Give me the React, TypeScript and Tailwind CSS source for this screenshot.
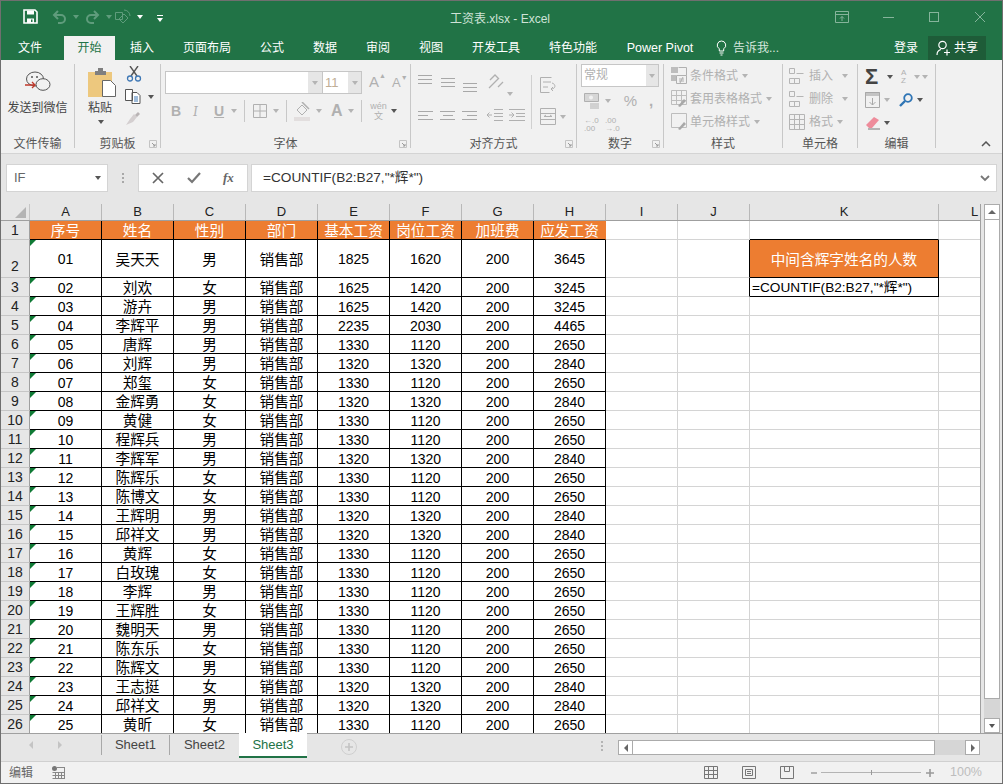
import type { ReactNode } from "react";

const tabs = [
  { name: "文件", w: "w-[58px] mr-[5px]" },
  { name: "开始", w: "w-[51px]", active: true },
  { name: "插入", w: "w-[54px]" },
  { name: "页面布局", w: "w-[76px]" },
  { name: "公式", w: "w-[54px]" },
  { name: "数据", w: "w-[52px]" },
  { name: "审阅", w: "w-[54px]" },
  { name: "视图", w: "w-[52px]" },
  { name: "开发工具", w: "w-[78px]" },
  { name: "特色功能", w: "w-[76px]" },
  { name: "Power Pivot", w: "w-[98px] text-[12.5px]" },
];

const columns = ["A", "B", "C", "D", "E", "F", "G", "H", "I", "J", "K", "L"];
const headers = ["序号", "姓名", "性别", "部门", "基本工资", "岗位工资", "加班费", "应发工资"];

const people: [string, string, number, number, number][] = [
  ["吴天天", "男", 1825, 1620, 3645],
  ["刘欢", "女", 1625, 1420, 3245],
  ["游卉", "男", 1625, 1420, 3245],
  ["李辉平", "男", 2235, 2030, 4465],
  ["唐辉", "男", 1330, 1120, 2650],
  ["刘辉", "男", 1320, 1320, 2840],
  ["郑玺", "女", 1330, 1120, 2650],
  ["金辉勇", "女", 1320, 1320, 2840],
  ["黄健", "女", 1330, 1120, 2650],
  ["程辉兵", "男", 1330, 1120, 2650],
  ["李辉军", "男", 1320, 1320, 2840],
  ["陈辉乐", "女", 1330, 1120, 2650],
  ["陈博文", "女", 1330, 1120, 2650],
  ["王辉明", "男", 1320, 1320, 2840],
  ["邱祥文", "男", 1320, 1320, 2840],
  ["黄辉", "女", 1330, 1120, 2650],
  ["白玫瑰", "女", 1330, 1120, 2650],
  ["李辉", "男", 1330, 1120, 2650],
  ["王辉胜", "女", 1330, 1120, 2650],
  ["魏明天", "男", 1330, 1120, 2650],
  ["陈东乐", "女", 1330, 1120, 2650],
  ["陈辉文", "男", 1330, 1120, 2650],
  ["王志挺", "女", 1320, 1320, 2840],
  ["邱祥文", "男", 1320, 1320, 2840],
  ["黄昕", "女", 1330, 1120, 2650],
];

const formula = '=COUNTIF(B2:B27,"*辉*")';

const Caret = ({ dark, white }: { dark?: boolean; white?: boolean }) => (
  <span
    className={`inline-block w-0 h-0 shrink-0 border-x-[3.5px] border-x-transparent border-t-[4px] ${
      white ? "border-t-white" : dark ? "border-t-[#555555]" : "border-t-[#b4b4b4]"
    }`}
  />
);

const Icon = ({ w, h, children, className }: { w: number; h: number; children: ReactNode; className?: string }) => (
  <svg width={w} height={h} viewBox={`0 0 ${w} ${h}`} fill="none" className={`shrink-0 ${className ?? ""}`}>
    {children}
  </svg>
);

const Launcher = () => (
  <Icon w={8} h={8}>
    <path d="M0.5 0.5h7v7h-7z" stroke="#c4c4c4" />
    <path d="M3 3l3 3M6 4v2H4" stroke="#9a9a9a" />
  </Icon>
);

const Lines = ({ widths, aligns }: { widths: number[]; aligns: string }) => (
  <div className={`flex flex-col gap-[3px] w-[15px] ${aligns}`}>
    {widths.map((w, i) => (
      <div key={i} className="h-px bg-[#a8a8a8]" style={{ width: w }} />
    ))}
  </div>
);

const Group = ({ w, label, launcher, children }: { w: string; label: string; launcher?: boolean; children: ReactNode }) => (
  <div className={`${w} shrink-0 flex flex-col border-r border-[#c8c8c8]`}>
    <div className="flex-1 min-h-0">{children}</div>
    <div className="h-[14px] relative flex items-center justify-center pt-[5px] text-[12px] text-[#555555] leading-none">
      {label}
      {launcher && (
        <span className="absolute right-[3px] top-[6px] flex">
          <Launcher />
        </span>
      )}
    </div>
  </div>
);

const StyleRow = ({ icon, label }: { icon: ReactNode; label: string }) => (
  <div className="h-[23px] flex items-center text-[12px] text-[#b0b0b0]">
    <span className="w-[19px] flex">{icon}</span>
    <span>{label}</span>
    <span className="ml-[4px] flex">
      <Caret />
    </span>
  </div>
);

const GridIcon = ({ w = 16, h = 16 }: { w?: number; h?: number }) => (
  <Icon w={w} h={h}>
    <path d={`M0.5 0.5h${w - 1}v${h - 1}h-${w - 1}z M0.5 5.5h${w - 1} M0.5 10.5h${w - 1} M5.5 0.5v${h - 1} M10.5 0.5v${h - 1}`} stroke="#b5b5b5" />
  </Icon>
);

const TitleBar = () => (
  <div className="h-[35px] bg-[#217346] flex items-center text-[12px] text-[#cfe3d7] relative">
    <div className="flex items-center ml-[22px] mb-[4px]">
      <Icon w={15} h={15}>
        <path d="M1 1h11l2 2v11H1z" stroke="#fff" strokeWidth="1.6" />
        <path d="M4 1.5h7v4H4zM4 9.5h7V14H4z" fill="#fff" />
        <path d="M8 10.5h1.5v2.5H8z" fill="#217346" />
      </Icon>
      <Icon w={15} h={14} className="ml-[14px]">
        <path d="M2 5h7a4 4 0 0 1 0 8H6M6 1L2 5l4 4" stroke="#5f9c7c" strokeWidth="2" />
      </Icon>
      <span className="ml-[6px] flex">
        <span className="inline-block w-0 h-0 border-x-[3.5px] border-x-transparent border-t-[4px] border-t-[#5f9c7c]" />
      </span>
      <Icon w={15} h={14} className="ml-[6px]">
        <path d="M13 5H6a4 4 0 0 0 0 8h3M9 1l4 4-4 4" stroke="#5f9c7c" strokeWidth="2" />
      </Icon>
      <span className="ml-[6px] flex">
        <span className="inline-block w-0 h-0 border-x-[3.5px] border-x-transparent border-t-[4px] border-t-[#5f9c7c]" />
      </span>
      <Icon w={17} h={16} className="ml-[3px]">
        <path d="M0.5 3.5h7v7h-7zM9 5l4 4-5 5-4-4zM9 1a6 6 0 0 1 6 6" stroke="#5f9c7c" />
      </Icon>
      <span className="ml-[5px] flex">
        <Caret white />
      </span>
      <span className="ml-[14px] flex flex-col items-center gap-[2px] mt-[3px]">
        <span className="w-[6px] h-px bg-white" />
        <Caret white />
      </span>
    </div>
    <span className="absolute left-[449px] top-[9px]">工资表.xlsx - Excel</span>
    <div className="ml-auto flex items-center mb-[3px]">
      <Icon w={14} h={12} className="mr-[34px]">
        <path d="M0.5 0.5h13v11h-13zM0.5 3.5h13M7 10V5.5M5 7.5l2-2 2 2" stroke="#86b49b" />
      </Icon>
      <span className="w-[11px] h-px bg-[#86b49b] mr-[35px]" />
      <span className="w-[10px] h-[10px] border border-[#86b49b] mr-[35px]" />
      <Icon w={12} h={12} className="mr-[16px]">
        <path d="M1 1l10 10M11 1L1 11" stroke="#86b49b" />
      </Icon>
    </div>
  </div>
);

const TabBar = () => (
  <div className="h-[24px] bg-[#217346] flex text-[12px] text-white">
    {tabs.map((t) => (
      <div
        key={t.name}
        className={`${t.w} flex items-center justify-center ${t.active ? "bg-[#f1f1f1] text-[#217346]" : ""}`}
      >
        {t.name}
      </div>
    ))}
    <div className="ml-[6px] flex items-center gap-[3px] text-[12px] text-[#d7e7de]">
      <Icon w={13} h={16}>
        <path d="M6.5 1a4.2 4.2 0 0 0-2.2 7.8V11h4.4V8.8A4.2 4.2 0 0 0 6.5 1zM4.5 13h4M5.5 15h2" stroke="#fff" />
      </Icon>
      <span className="ml-[2px]">告诉我...</span>
    </div>
    <span className="ml-auto flex items-center mr-[10px]">登录</span>
    <div className="w-[58px] mr-[16px] bg-[#1e5c38] flex items-center justify-center gap-[3px]">
      <Icon w={15} h={16}>
        <circle cx="6.5" cy="5" r="3.7" stroke="#fff" strokeWidth="1.2" />
        <path d="M1 15c0-3 2-5 4-5.5M8 12.5h6M11 9.5v6" stroke="#fff" strokeWidth="1.2" />
      </Icon>
      <span>共享</span>
    </div>
  </div>
);

const Ribbon = () => (
  <div className="h-[94px] bg-[#f1f1f1] flex pt-[4px] pb-[5px] border-b border-[#d4d4d4]">
    <Group w="w-[74px]" label="文件传输">
      <div className="flex flex-col items-center pt-[6px]">
        <Icon w={26} h={24}>
          <ellipse cx="10" cy="9" rx="8.5" ry="7" stroke="#555" />
          <ellipse cx="18" cy="14.5" rx="7" ry="5.8" fill="#f1f1f1" stroke="#555" />
          <circle cx="7" cy="7" r="1" fill="#555" />
          <circle cx="12" cy="7" r="1" fill="#555" />
          <path d="M0 15h10M7 12l3 3-3 3" stroke="#c0392b" strokeWidth="1.3" />
        </Icon>
        <span className="text-[12px] text-[#444444] mt-[4px] leading-[20px]">发送到微信</span>
      </div>
    </Group>
    <Group w="w-[86px]" label="剪贴板" launcher>
      <div className="flex">
        <div className="w-[49px] flex flex-col items-start pt-[4px] pl-[13px]">
          <Icon w={30} h={30}>
            <path d="M0 4h24v25H0z" fill="#edc87e" />
            <path d="M7 3h3V0h5v3h3v4H7z" fill="#7f7f7f" />
            <path d="M14.5 12.5h8l5 5v11h-13z" fill="#fff" stroke="#666" />
          </Icon>
          <span className="text-[12px] text-[#444444] leading-[18px] mt-[1px]">粘贴</span>
          <span className="flex mt-[3px] ml-[10px]">
            <Caret dark />
          </span>
        </div>
        <div className="flex flex-col pl-[1px] pt-[2px]">
          <Icon w={16} h={16} className="ml-[1px]">
            <path d="M4 0l7 10M12 0L5 10" stroke="#555" strokeWidth="1.4" />
            <circle cx="4" cy="12.5" r="2.5" stroke="#3f78b5" strokeWidth="1.3" />
            <circle cx="12" cy="12.5" r="2.5" stroke="#3f78b5" strokeWidth="1.3" />
          </Icon>
          <div className="flex items-center mt-[7px] gap-[6px]">
            <Icon w={17} h={15}>
              <path d="M0.5 0.5h7v11h-7zM7 3.5h5l3 3v8H7z" fill="#fff" stroke="#555" />
              <path d="M9 8h4M9 10h4M9 12h4" stroke="#3f78b5" />
            </Icon>
            <Caret dark />
          </div>
          <Icon w={16} h={14} className="mt-[8px]">
            <path d="M1 13l7-3 4-5-3-3-4 5z" fill="#d4cfd0" />
            <path d="M10 3l3-3 2 2-3 3z" fill="#b9b4b5" />
          </Icon>
        </div>
      </div>
    </Group>
    <Group w="w-[250px]" label="字体" launcher>
      <div className="pl-[4px] pt-[7px]">
        <div className="flex items-center">
          <div className="w-[197px] h-[23px] flex bg-white border border-[#c6c6c6]">
            <div className="w-[142px]" />
            <div className="w-[14px] bg-[#e6e6e6] flex items-center justify-center">
              <Caret />
            </div>
            <div className="w-[1px] bg-[#c6c6c6]" />
            <div className="flex-1 flex items-center pl-[2px] text-[13px] text-[#c0ae96]">11</div>
            <div className="w-[13px] bg-[#e6e6e6] flex items-center justify-center">
              <Caret />
            </div>
          </div>
          <span className="ml-[7px] text-[15px] text-[#b0b0b0] w-[23px] flex">
            A<span className="text-[7px] leading-[10px]">▲</span>
          </span>
          <span className="text-[13px] text-[#b0b0b0] flex">
            A<span className="text-[7px] leading-[10px]">▼</span>
          </span>
        </div>
        <div className="flex items-center h-[22px] mt-[6px] text-[#b0b0b0]">
          <span className="ml-[6px] w-[22px] text-[14px] font-bold">B</span>
          <span className="w-[21px] text-[14px] italic font-serif">I</span>
          <span className="w-[17px] text-[14px] font-bold underline">U</span>
          <Caret />
          <span className="ml-[7px] w-px h-[22px] bg-[#c8c8c8]" />
          <Icon w={14} h={14} className="ml-[8px]">
            <path d="M0.5 0.5h13v13h-13zM7 0v14M0 7h14" stroke="#b0b0b0" />
          </Icon>
          <span className="ml-[6px] flex">
            <Caret />
          </span>
          <span className="ml-[7px] w-px h-[22px] bg-[#c8c8c8]" />
          <Icon w={17} h={19} className="ml-[7px]">
            <path d="M3 8l5-5 5 5-5 5z" stroke="#b0b0b0" />
            <path d="M8 0l7 7" stroke="#b0b0b0" strokeWidth="1.5" />
            <path d="M0 15h16v4H0z" fill="#e2dede" />
          </Icon>
          <span className="ml-[5px] flex">
            <Caret />
          </span>
          <span className="ml-[9px] w-[15px] text-[16px] font-semibold">A</span>
          <span className="ml-[2px] flex">
            <Caret />
          </span>
          <span className="ml-[7px] w-px h-[22px] bg-[#c8c8c8]" />
          <div className="ml-[8px] w-[17px] flex flex-col items-center text-[9px] leading-[10px]">
            <span>wén</span>
            <span>文</span>
          </div>
          <span className="ml-[4px] flex">
            <Caret dark />
          </span>
        </div>
      </div>
    </Group>
    <Group w="w-[166px]" label="对齐方式" launcher>
      <div className="flex pl-[7px] pt-[5px]">
        <div className="w-[113px] flex flex-col">
          <div className="flex h-[31px]">
            <div className="pt-[6px]">
              <Lines widths={[14, 14, 14]} aligns="" />
            </div>
            <div className="pt-[9px] ml-[8px]">
              <Lines widths={[14, 14, 14]} aligns="" />
            </div>
            <div className="pt-[14px] ml-[7px]">
              <Lines widths={[14, 14, 14]} aligns="" />
            </div>
            <Icon w={16} h={17} className="ml-[10px] mt-[4px]">
              <path d="M1 15L11 5M2 7l5-5 3 3" stroke="#b0b0b0" strokeWidth="1.3" />
              <path d="M10 14l5-5" stroke="#b0b0b0" strokeWidth="1.3" />
            </Icon>
            <span className="ml-[3px] mt-[10px]">
              <Caret />
            </span>
          </div>
          <div className="flex mt-[9px] items-center">
            <Lines widths={[15, 10, 15]} aligns="items-start" />
            <div className="ml-[7px]">
              <Lines widths={[15, 10, 15]} aligns="items-center" />
            </div>
            <div className="ml-[7px]">
              <Lines widths={[15, 10, 15]} aligns="items-end" />
            </div>
            <Icon w={16} h={12} className="ml-[10px]">
              <path d="M7 0.5h9M7 4.5h9M7 7.5h9M7 11.5h9M5 6H0M2.5 3.5L0 6l2.5 2.5" stroke="#b0b0b0" />
            </Icon>
            <Icon w={16} h={12} className="ml-[6px]">
              <path d="M0 0.5h16M7 4.5h9M7 7.5h9M0 11.5h16M0 6h5M2.5 3.5L5 6 2.5 8.5" stroke="#b0b0b0" />
            </Icon>
          </div>
        </div>
        <div className="w-px h-[54px] bg-[#d0d0d0] mt-[6px]" />
        <div className="flex flex-col pl-[8px] pt-[8px]">
          <Icon w={16} h={17}>
            <path d="M0.5 0.5h11M0.5 0.5v15h9M3 5h8M3 10h5M12 6c4 1 4 6-1 6M13 10l-2 2 2 2" stroke="#b0b0b0" />
          </Icon>
          <div className="flex items-center gap-[4px] mt-[14px]">
            <Icon w={16} h={17}>
              <path d="M0.5 0.5h15v16H0.5zM0.5 5.5h15M0.5 11.5h15M4 8.5h8M4 8.5l2-1.5M12 8.5l-2-1.5" stroke="#b0b0b0" />
            </Icon>
            <Caret />
          </div>
        </div>
      </div>
    </Group>
    <Group w="w-[87px]" label="数字" launcher>
      <div className="pl-[4px]">
        <div className="w-[78px] h-[23px] flex bg-white border border-[#c6c6c6] text-[12px] text-[#b0b0b0]">
          <span className="flex-1 pl-[2px] leading-[21px]">常规</span>
          <span className="w-[12px] bg-[#e6e6e6] flex items-center justify-center">
            <Caret />
          </span>
        </div>
        <div className="flex items-center h-[22px] mt-[3px] pl-[3px] text-[#b0b0b0]">
          <Icon w={16} h={16}>
            <path d="M0.5 0.5h14v8h-14z" fill="#d6d6d6" stroke="#b0b0b0" />
            <circle cx="7" cy="4.5" r="2" fill="#f1f1f1" />
            <path d="M6 11h9M6 13h9M6 15h9" stroke="#b0b0b0" />
          </Icon>
          <span className="ml-[5px] flex">
            <Caret />
          </span>
          <span className="ml-[8px] text-[15px] w-[23px] text-center">%</span>
          <span className="ml-[7px] text-[15px] font-bold">,</span>
        </div>
        <div className="flex h-[24px] mt-[1px] pl-[3px] gap-[7px] items-center">
          <div className="text-[8px] leading-[8px] text-[#b0b0b0] w-[14px]">
            ←.0
            <br />
            .00
          </div>
          <div className="text-[8px] leading-[8px] text-[#b0b0b0] w-[14px]">
            .00
            <br />
            →.0
          </div>
        </div>
      </div>
    </Group>
    <Group w="w-[119px]" label="样式">
      <div className="pl-[7px]">
        <StyleRow
          label="条件格式"
          icon={
            <Icon w={16} h={17}>
              <path d="M0 0h7v6H0zM0 8h5v6H0z" fill="#bdbdbd" />
              <path d="M7.5 0.5h8v8M5.5 8.5h10v8h-10z" stroke="#b0b0b0" />
              <path d="M8 12h5M8 14h5M12 10l-3 6" stroke="#b0b0b0" />
            </Icon>
          }
        />
        <StyleRow
          label="套用表格格式"
          icon={
            <Icon w={16} h={17}>
              <path d="M0.5 0.5h15v14h-15zM0.5 5.5h15M0.5 10.5h15M5.5 0.5v14M10.5 0.5v14" stroke="#bdbdbd" />
              <path d="M7 16l6-7 2 2-6 6z" fill="#a8a8a8" />
            </Icon>
          }
        />
        <StyleRow
          label="单元格样式"
          icon={
            <Icon w={16} h={17}>
              <path d="M0.5 0.5h15v14h-15z" stroke="#bdbdbd" />
              <path d="M7 16l6-7 2 2-6 6z" fill="#a8a8a8" />
            </Icon>
          }
        />
      </div>
    </Group>
    <Group w="w-[75px]" label="单元格">
      <div className="pl-[6px] text-[12px] text-[#b0b0b0]">
        {["插入", "删除", "格式"].map((t, i) => (
          <div key={t} className="h-[23px] flex items-center">
            <span className="w-[20px] flex">
              {i === 2 ? (
                <GridIcon />
              ) : (
                <Icon w={17} h={16}>
                  <path d="M0.5 0.5h5v5h-5zM0.5 10.5h5v5h-5zM5.5 10.5h5v5h-5zM7.5 5.5h7" stroke="#b5b5b5" />
                </Icon>
              )}
            </span>
            <span>{t}</span>
            <span className={i === 2 ? "ml-[4px] flex" : "ml-[9px] flex"}>
              <Caret />
            </span>
          </div>
        ))}
      </div>
    </Group>
    <Group w="w-[78px]" label="编辑">
      <div className="pl-[7px] pt-[2px]">
        <div className="flex items-center h-[22px]">
          <span className="w-[18px] text-[22px] leading-none font-bold text-[#444444]">Σ</span>
          <span className="ml-[4px] flex">
            <Caret dark />
          </span>
          <div className="ml-[8px] w-[13px] text-[8px] leading-[8px] text-[#b0b0b0]">
            A
            <br />
            Z
          </div>
          <Caret />
          <span className="ml-[2px] flex">
            <Caret />
          </span>
        </div>
        <div className="flex items-center h-[23px]">
          <Icon w={15} h={16}>
            <path d="M0 0h15v4H0z" fill="#c4c4c4" />
            <path d="M0.5 0.5h14v15h-14zM7.5 6v7M4.5 10l3 3 3-3" stroke="#a8a8a8" />
          </Icon>
          <span className="ml-[4px] flex">
            <Caret />
          </span>
          <Icon w={14} h={14} className="ml-[9px]">
            <circle cx="9" cy="5" r="3.8" stroke="#2f75b5" strokeWidth="1.8" />
            <path d="M6 8l-5 5" stroke="#2f75b5" strokeWidth="2.4" />
          </Icon>
          <span className="ml-[4px] flex">
            <Caret dark />
          </span>
        </div>
        <div className="flex items-center h-[23px]">
          <Icon w={16} h={15}>
            <path d="M1 10l8-8 5 3-7 8H4z" fill="#ee8c9b" />
            <path d="M3 14h12" stroke="#777" />
          </Icon>
          <span className="ml-[3px] flex">
            <Caret dark />
          </span>
        </div>
      </div>
    </Group>
    <div className="flex-1 flex items-end justify-end pr-[11px] pb-[1px]">
      <Icon w={10} h={6}>
        <path d="M1 5l4-4 4 4" stroke="#555" strokeWidth="1.5" />
      </Icon>
    </div>
  </div>
);

const FormulaBar = () => (
  <div className="h-[50px] bg-[#e6e6e6] flex pt-[10px] pl-[5px]">
    <div className="w-[102px] h-[28px] bg-white border border-[#d4d4d4] flex items-center justify-between pl-[7px] pr-[6px] text-[13px] text-[#666666]">
      IF
      <Caret dark />
    </div>
    <div className="w-[30px] h-[28px] flex flex-col items-center justify-center gap-[2px]">
      <span className="w-[2px] h-[2px] bg-[#a8a8a8]" />
      <span className="w-[2px] h-[2px] bg-[#a8a8a8]" />
      <span className="w-[2px] h-[2px] bg-[#a8a8a8]" />
    </div>
    <div className="w-[110px] h-[28px] bg-white border border-[#d4d4d4] flex items-center pl-[13px]">
      <Icon w={12} h={12}>
        <path d="M1 1l10 10M11 1L1 11" stroke="#666" strokeWidth="1.7" />
      </Icon>
      <Icon w={15} h={12} className="ml-[23px]">
        <path d="M1 6l4 4 8-9" stroke="#777" strokeWidth="2.2" />
      </Icon>
      <span className="ml-[21px] text-[13px] italic font-bold font-['Liberation_Serif',serif] text-[#666666]">fx</span>
    </div>
    <div className="w-[746px] h-[28px] ml-[3px] bg-white border border-[#d4d4d4] flex items-center justify-between pl-[11px] pr-[6px] text-[13.65px] text-[#333333]">
      {formula}
      <Icon w={10} h={7}>
        <path d="M1 1l4 4 4-4" stroke="#777" strokeWidth="1.8" />
      </Icon>
    </div>
  </div>
);

const textCell = "w-[72px] shrink-0 flex items-center justify-center pt-[2px] border-r";

const DataRow = ({ row, i }: { row: [string, string, number, number, number]; i: number }) => {
  const last = i === people.length - 1;
  const h = i === 0 ? "h-[38px]" : last ? "h-[18px]" : "h-[19px]";
  const line = last ? "border-black border-b-0" : "border-black border-b";
  const grid = last ? "border-[#d4d4d4] border-b-0" : "border-[#d4d4d4] border-b";
  const values = [String(i + 1).padStart(2, "0"), row[0], row[1], "销售部", row[2], row[3], 200, row[4]];
  return (
    <div className={`flex ${h}`}>
      <div
        className={`w-[29px] shrink-0 bg-[#e6e6e6] border-r border-r-[#9f9f9f] flex justify-center text-[14px] text-[#222222] ${
          last ? "" : "border-b border-b-[#c6c6c6]"
        } ${i === 0 ? "items-end" : "items-center"}`}
      >
        {i + 2}
      </div>
      {values.map((v, c) => (
        <div
          key={c}
          className={`${textCell} relative text-black ${line} ${
            typeof v === "string" && c > 0 ? "text-[14.67px]" : "text-[14px]"
          }`}
        >
          {c === 0 && (
            <span className="absolute left-0 top-0 w-0 h-0 border-t-[6px] border-t-[#0f7a35] border-r-[6px] border-r-transparent" />
          )}
          {v}
        </div>
      ))}
      <div className={`w-[72px] shrink-0 border-r ${grid}`} />
      <div
        className={`w-[72px] shrink-0 border-r ${i < 2 ? "border-r-black" : "border-r-[#d4d4d4]"} border-b-[#d4d4d4] ${
          last ? "border-b-0" : "border-b"
        }`}
      />
      {i === 0 ? (
        <div className="w-[189px] shrink-0 bg-[#ed7d31] border-r border-b border-black flex items-center justify-center pt-[2px] text-white text-[14.67px]">
          中间含辉字姓名的人数
        </div>
      ) : i === 1 ? (
        <div className="w-[189px] shrink-0 bg-white border-r border-b border-black pl-[2px] text-[13.65px] leading-[20px] whitespace-nowrap overflow-hidden">
          {formula}
        </div>
      ) : (
        <div className={`w-[189px] shrink-0 border-r ${grid}`} />
      )}
      <div className={`w-[72px] shrink-0 border-r ${grid}`} />
    </div>
  );
};

const Sheet = () => (
  <div className="h-[529px] bg-[#e6e6e6] flex">
    <div className="w-[980px] shrink-0 overflow-hidden border-r border-[#a0a0a0]">
      <div className="w-[1100px] h-[17px] flex border-b border-[#9f9f9f] bg-[#e6e6e6]">
        <div className="w-[29px] shrink-0 border-r border-[#c6c6c6] flex items-end justify-end pr-[3px] pb-[2px]">
          <span className="w-0 h-0 border-l-[11px] border-l-transparent border-b-[11px] border-b-[#b4b4b4]" />
        </div>
        {columns.map((c) => (
          <div
            key={c}
            className={`${c === "K" ? "w-[189px]" : "w-[72px]"} shrink-0 flex items-center justify-center border-r border-[#b8b8b8] text-[13px] text-[#222222]`}
          >
            {c}
          </div>
        ))}
      </div>
      <div className="w-[1100px] bg-white">
        <div className="flex h-[19px]">
          <div className="w-[29px] shrink-0 bg-[#e6e6e6] border-r border-r-[#9f9f9f] border-b border-b-[#c6c6c6] flex items-center justify-center text-[14px] text-[#222222]">
            1
          </div>
          {headers.map((h, i) => (
            <div
              key={h}
              className={`${textCell} bg-[#ed7d31] text-white text-[14.67px] border-b border-b-black ${
                i === 7 ? "border-r-[#ed7d31]" : "border-r-black"
              }`}
            >
              {h}
            </div>
          ))}
          <div className="w-[72px] shrink-0 border-r border-b border-[#d4d4d4]" />
          <div className="w-[72px] shrink-0 border-r border-b border-[#d4d4d4]" />
          <div className="w-[189px] shrink-0 border-r border-r-[#d4d4d4] border-b border-b-black" />
          <div className="w-[72px] shrink-0 border-r border-b border-[#d4d4d4]" />
        </div>
        {people.map((row, i) => (
          <DataRow key={i} row={row} i={i} />
        ))}
      </div>
    </div>
    <div className="ml-[3px] w-[16px] flex flex-col bg-[#d6d6d6]">
      <div className="h-[16px] bg-white border border-[#ababab] flex items-center justify-center">
        <span className="w-0 h-0 border-x-[4px] border-x-transparent border-b-[4px] border-b-[#666666]" />
      </div>
      <div className="h-[479px] bg-white border-x border-b border-[#ababab]" />
      <div className="flex-1" />
      <div className="h-[15px] bg-white border border-[#ababab] flex items-center justify-center">
        <Caret dark />
      </div>
    </div>
  </div>
);

const SheetTabs = () => (
  <div className="h-[28px] bg-[#e6e6e6] border-t border-[#a0a0a0] flex text-[13px] text-[#444444]">
    <div className="w-[100px] flex items-center pl-[28px] gap-[25px] pb-[5px]">
      <span className="w-0 h-0 border-y-[4px] border-y-transparent border-r-[4px] border-r-[#c4c4c4]" />
      <span className="w-0 h-0 border-y-[4px] border-y-transparent border-l-[4px] border-l-[#c4c4c4]" />
    </div>
    <div className="h-[20px] w-[69px] border-x border-[#a8a8a8] flex items-center justify-center mt-[1px]">Sheet1</div>
    <div className="h-[20px] w-[69px] flex items-center justify-center mt-[1px]">Sheet2</div>
    <div className="h-[25px] w-[68px] -mt-px bg-white border-b-2 border-[#217346] flex items-center justify-center text-[#217346]">
      Sheet3
    </div>
    <Icon w={16} h={16} className="ml-[34px] mt-[5px]">
      <circle cx="8" cy="8" r="7.5" stroke="#cfcfcf" />
      <path d="M8 4v8M4 8h8" stroke="#c4c4c4" strokeWidth="1.6" />
    </Icon>
    <div className="ml-[244px] mt-[7px] flex flex-col gap-[2px]">
      <span className="w-[2px] h-[2px] bg-[#b4b4b4]" />
      <span className="w-[2px] h-[2px] bg-[#b4b4b4]" />
      <span className="w-[2px] h-[2px] bg-[#b4b4b4]" />
    </div>
    <div className="ml-[15px] mt-[6px] w-[362px] h-[15px] flex bg-[#d6d6d6]">
      <div className="w-[15px] bg-white border border-[#ababab] flex items-center justify-center">
        <span className="w-0 h-0 border-y-[4px] border-y-transparent border-r-[4px] border-r-[#666666]" />
      </div>
      <div className="w-[302px] bg-white border-y border-r border-[#ababab]" />
      <div className="flex-1" />
      <div className="w-[15px] bg-white border border-[#ababab] flex items-center justify-center">
        <span className="w-0 h-0 border-y-[4px] border-y-transparent border-l-[4px] border-l-[#666666]" />
      </div>
    </div>
  </div>
);

const StatusBar = () => (
  <div className="flex-1 bg-[#f1f1f1] border-t border-[#d0d0d0] flex items-center text-[12px] text-[#666666]">
    <span className="ml-[8px]">编辑</span>
    <Icon w={13} h={13} className="ml-[19px]">
      <circle cx="2.5" cy="2.5" r="2.5" fill="#777" />
      <path d="M5 1.5h8M0.5 6.5h12M0.5 9.5h12M0.5 12.5h12M3.5 6v7M6.5 6v7M9.5 6v7M12.5 2v11" stroke="#888" />
    </Icon>
    <div className="ml-auto flex items-center mr-[20px]">
      <Icon w={14} h={13}>
        <path d="M0.5 0.5h13v12h-13zM0.5 4.5h13M0.5 8.5h13M4.5 0.5v12M9.5 0.5v12" stroke="#777" />
      </Icon>
      <Icon w={14} h={13} className="ml-[24px]">
        <path d="M0.5 0.5h13v12h-13zM3.5 3.5h7v6h-7zM5 5.5h4M5 7.5h4" stroke="#777" />
      </Icon>
      <Icon w={14} h={13} className="ml-[24px]">
        <path d="M0.5 0.5h13v12h-13zM4.5 0.5v5h5v-5" stroke="#777" />
      </Icon>
      <span className="ml-[17px] w-[6px] h-[2px] bg-[#b4b4b4]" />
      <div className="ml-[4px] w-[100px] h-px bg-[#b4b4b4] flex justify-center items-center">
        <span className="w-px h-[5px] bg-[#999999]" />
      </div>
      <Icon w={8} h={8} className="ml-[5px]">
        <path d="M4 0v8M0 4h8" stroke="#999" strokeWidth="1.6" />
      </Icon>
      <span className="ml-[16px] text-[12.5px] text-[#bdbdbd]">100%</span>
    </div>
  </div>
);

const App = () => {
  return (
    <div className="w-[1003px] h-[784px] overflow-hidden flex flex-col border border-[#6f6f6f] bg-[#e6e6e6] font-['Liberation_Sans','Noto_Sans_CJK_SC',sans-serif]">
      <TitleBar />
      <TabBar />
      <Ribbon />
      <FormulaBar />
      <Sheet />
      <SheetTabs />
      <StatusBar />
    </div>
  );
};

export default App;
